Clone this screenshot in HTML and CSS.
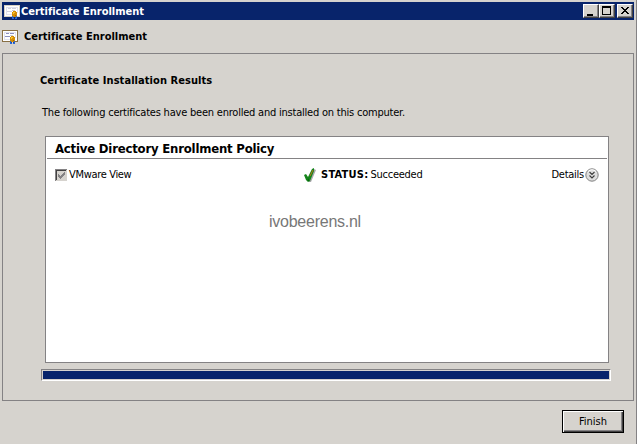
FILE: index.html
```html
<!DOCTYPE html>
<html lang="en">
<head>
<meta charset="utf-8">
<title>Certificate Enrollment</title>
<link rel="stylesheet" href="styles.css">
</head>
<body>
<svg class="defs" width="0" height="0" aria-hidden="true">
  <symbol id="certificate" viewBox="0 0 16 15">
    <path class="frame" d="M0 0h16v12H0z"/>
    <path fill="#fff" d="M1 1h14v10H1z"/>
    <path fill="#e1e1ed" d="M2 2h12v1H2zM2 3h1v7H2zM13 3h1v5h-1zM3 9h5v1H3z"/>
    <path class="ink" d="M4 3h3v1H4zM8 3h4v1H8zM3 6h5v1H3z"/>
    <path fill="#ccc" d="M8 5h3v1H8z"/>
    <path fill="#2867d6" d="M8 11h2v3H8zM11 11h2v3h-2z"/>
    <path fill="#1749a0" d="M9 11h1v2H9zM11 11h1v2h-1z"/>
    <path fill="#d58d05" d="M9 6h3v1h1v4h-1v1H9v-1H8V7h1z"/>
    <path fill="#f8c52e" d="M9 7h2v1h-1v1H9z"/>
    <path fill="#9e6700" d="M11 10h1v1h-1z"/>
  </symbol>
</svg>
<div class="window">
  <header class="titlebar">
    <svg class="cert" width="16" height="15"><use href="#certificate"/></svg>
    <span class="title">Certificate Enrollment</span>
    <div class="controls">
      <button class="control" aria-label="Minimize"><svg width="14" height="12"><path d="M3 9h6v2H3z"/></svg></button>
      <button class="control" aria-label="Maximize"><svg width="14" height="12"><path fill-rule="evenodd" d="M2 1h9v9H2zM3 3v6h7V3z"/></svg></button>
      <button class="control close" aria-label="Close"><svg width="14" height="12"><path d="M3 2h2v1h1v1h2V3h1V2h2v1h-1v1H9v1H8v1h1v1h1v1h1v1H9V8H8V7H6v1H5v1H3V8h1V7h1V6h1V5H5V4H4V3H3z"/></svg></button>
    </div>
  </header>
  <div class="heading">
    <svg class="cert" width="16" height="15"><use href="#certificate"/></svg>
    <span class="title">Certificate Enrollment</span>
  </div>
  <main class="page">
    <h1 class="results">Certificate Installation Results</h1>
    <p class="intro">The following certificates have been enrolled and installed on this computer.</p>
    <section class="list">
      <h2 class="policy"><span>Active Directory Enrollment Policy</span></h2>
      <div class="row">
        <div class="name">
          <svg width="12" height="12"><path fill="#d6d3ce" d="M0 0h12v12H0z"/><path fill="#848284" d="M0 0h12v1H1v11H0z"/><path fill="#424142" d="M1 1h10v1H2v9H1z"/><path fill="#848284" d="M3 5h1v1h1v1h1V6h1V5h1V4h1V3h1v3H9v1H8v1H7v1H6v1H5V9H4V8H3z"/></svg>
          <span class="label">VMware View</span>
        </div>
        <div class="status">
          <svg width="13" height="16" viewBox="0 0 13 16"><path fill="#aaa8ad" d="M4 10l2 1 4-9 2 1-5 12H5z"/><path fill="#15851b" d="M0 8l2-1 2 3 4-8 2-1v3L6 14l-2 1-2-2z"/><path fill="none" stroke="#ba7718" d="M6 9l3-6"/><path fill="#07630c" d="M3 11l1 2 1-2v3H4z"/></svg>
          <b class="status-key">STATUS:</b><span class="status-value">Succeeded</span>
        </div>
        <div class="details">
          <span>Details</span>
          <svg width="14" height="14"><circle cx="7" cy="7" r="6.2" fill="#dedede" stroke="#818181"/><path fill="none" stroke="#fff" d="M3 3.5Q7 0 11 3.5"/><path fill="none" stroke="#3c3c3c" stroke-width="1.1" d="M4.500 4L7 6.400 9.500 4M4.500 7.500L7 9.900l2.500-2.400"/></svg>
        </div>
      </div>
      <div class="watermark"><span>ivobeerens.nl</span></div>
    </section>
    <div class="progress"><div class="fill"></div></div>
  </main>
  <footer class="footer"><button class="finish"><span>Finish</span></button></footer>
</div>
</body>
</html>
```
FILE: styles.css
```css
* { box-sizing: border-box; }
body {
  margin: 0;
  background: #d6d3ce;
  color: #000;
  font: 11px/14px "DejaVu Sans Condensed", "DejaVu Sans", sans-serif;
  font-stretch: condensed;
}
h1, h2, p { margin: 0; font-size: inherit; }
svg { display: block; flex: none; }
span, b, h1, p { white-space: nowrap; }
.defs { position: absolute; }
.frame { fill: var(--frame); }
.ink { fill: var(--ink); }
.window {
  display: flex;
  flex-direction: column;
  width: 637px;
  height: 444px;
  padding: 2px 2px 0;
  border-right: 1px solid #848284;
}
.titlebar {
  display: flex;
  align-items: center;
  height: 18px;
  padding: 0 1px 0 2px;
  background: #08246b;
  color: #fff;
}
.titlebar .cert { --frame: #d9d2c4; --ink: #d0d0dc; margin-top: 3px; }
.title { margin: 1px 0 0 1px; font-weight: bold; letter-spacing: -0.01px; }
.controls { display: flex; margin-left: auto; }
.control {
  width: 16px;
  height: 14px;
  padding: 0;
  border: 1px solid;
  border-color: #fff #424142 #424142 #fff;
  background: #d6d3ce;
  box-shadow: inset -1px -1px #848284;
}
.close { margin-left: 2px; }
.heading { display: flex; align-items: center; height: 33px; }
.heading .cert { --frame: #897044; --ink: #8c8fc0; margin-top: 2px; }
.heading .title { margin: 0 0 0 6px; }
.page {
  display: flex;
  flex-direction: column;
  width: 632px;
  height: 348px;
  padding: 20px 22px 0 37px;
  border: 1px solid #848284;
}
.results { letter-spacing: 0.06px; }
.intro { margin-top: 18px; padding-left: 2px; letter-spacing: -0.215px; }
.list {
  width: 564px;
  height: 227px;
  margin: 16px 0 0 5px;
  padding: 0 1px;
  border: 1px solid #848284;
  background: #fff;
}
.policy {
  height: 22px;
  padding: 4px 0 0 8px;
  border-bottom: 1px solid #848284;
  font-size: 13px;
  line-height: 16px;
  letter-spacing: -0.2px;
}
.row { display: flex; align-items: center; height: 32px; padding: 0 8px; }
.name { display: flex; align-items: center; width: 249px; }
.label { margin-left: 2px; letter-spacing: -0.33px; }
.status { display: flex; align-items: center; }
.status-key { margin-left: 4px; letter-spacing: 0.25px; }
.status-value { margin-left: 2px; letter-spacing: -0.25px; }
.details {
  display: flex;
  align-items: center;
  gap: 1px;
  margin-left: auto;
  letter-spacing: -0.25px;
}
.watermark {
  padding: 21px 0 0 222px;
  color: #777;
  font: 16px/20px "Liberation Sans", sans-serif;
  letter-spacing: -0.25px;
}
.progress {
  width: 570px;
  height: 12px;
  margin: 6px 0 0 1px;
  padding: 1px;
  border: 1px solid;
  border-color: #848284 #fff #fff #848284;
}
.fill { height: 8px; background: #08246b; }
.footer { display: flex; justify-content: flex-end; padding: 9px 10px 0 0; }
.finish {
  width: 62px;
  height: 23px;
  padding: 0;
  border: 1px solid #000;
  background: #d6d3ce;
  box-shadow: inset 1px 1px #fff, inset -1px -1px #424142, inset -2px -2px #848284;
  color: #000;
  font: inherit;
}
```
